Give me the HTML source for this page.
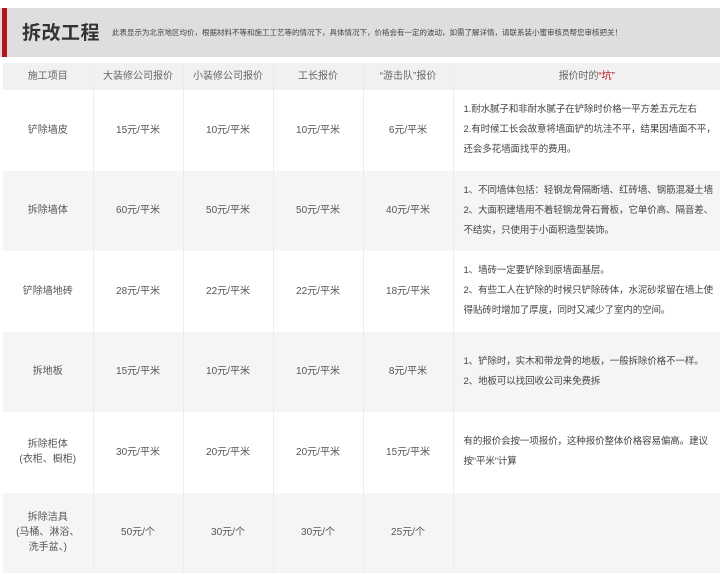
<!DOCTYPE html>
<html><head><meta charset="utf-8"><style>
*{margin:0;padding:0;box-sizing:border-box}
body{width:720px;height:575px;background:#fff;font-family:"Liberation Sans","Noto Sans CJK SC",sans-serif;overflow:hidden;position:relative}
.band{position:absolute;left:0;top:8px;width:720px;height:49px;background:#dedede}
.bar{position:absolute;left:2px;top:8px;width:5px;height:49px;background:#b5161d}
.t{position:absolute;left:22px;top:18px;font-size:19px;font-weight:bold;color:#333;letter-spacing:0.5px}
.s{position:absolute;left:112px;top:27px;font-size:7.5px;color:#444;white-space:nowrap}
table{position:absolute;left:3px;top:63px;border-collapse:collapse;table-layout:fixed;width:717px}
td{border-right:1px solid #ececec;font-size:10px;color:#555;text-align:center;vertical-align:middle;line-height:15px;overflow:hidden}
td:last-child{border-right:none;text-align:left;padding-left:10px;color:#444;line-height:20px;font-size:9.5px;white-space:nowrap;letter-spacing:-0.1px}
tr.h td{height:27px;background:#f1f1f1;color:#666}
tr.h td:last-child{text-align:center;padding-left:0;font-size:10px}
tr.g td{background:#f5f5f5}
tr.r td{height:80.5px}
.red{color:#b5161d}
</style></head><body>
<div class="band"></div><div class="bar"></div>
<div class="t">拆改工程</div>
<div class="s">此表显示为北京地区均价，根据材料不等和施工工艺等的情况下，具体情况下，价格会有一定的波动，如需了解详情，请联系装小蜜审核员帮您审核把关！</div>
<table>
<colgroup><col style="width:90px"><col style="width:90px"><col style="width:90px"><col style="width:90px"><col style="width:90px"><col></colgroup>
<tr class="h"><td>施工项目</td><td>大装修公司报价</td><td>小装修公司报价</td><td>工长报价</td><td>“游击队”报价</td><td>报价时的<span class="red">“坑”</span></td></tr>
<tr class="r"><td>铲除墙皮</td><td>15元/平米</td><td>10元/平米</td><td>10元/平米</td><td>6元/平米</td><td>1.耐水腻子和非耐水腻子在铲除时价格一平方差五元左右<br>2.有时候工长会故意将墙面铲的坑洼不平，结果因墙面不平，<br>还会多花墙面找平的费用。</td></tr>
<tr class="r g"><td>拆除墙体</td><td>60元/平米</td><td>50元/平米</td><td>50元/平米</td><td>40元/平米</td><td>1、不同墙体包括：轻钢龙骨隔断墙、红砖墙、钢筋混凝土墙<br>2、大面积建墙用不着轻钢龙骨石膏板，它单价高、隔音差、<br>不结实，只使用于小面积造型装饰。</td></tr>
<tr class="r"><td>铲除墙地砖</td><td>28元/平米</td><td>22元/平米</td><td>22元/平米</td><td>18元/平米</td><td>1、墙砖一定要铲除到原墙面基层。<br>2、有些工人在铲除的时候只铲除砖体，水泥砂浆留在墙上使<br>得贴砖时增加了厚度，同时又减少了室内的空间。</td></tr>
<tr class="r g"><td>拆地板</td><td>15元/平米</td><td>10元/平米</td><td>10元/平米</td><td>8元/平米</td><td>1、铲除时，实木和带龙骨的地板，一般拆除价格不一样。<br>2、地板可以找回收公司来免费拆</td></tr>
<tr class="r"><td>拆除柜体<br>(衣柜、橱柜)</td><td>30元/平米</td><td>20元/平米</td><td>20元/平米</td><td>15元/平米</td><td>有的报价会按一项报价，这种报价整体价格容易偏高。建议<br>按“平米”计算</td></tr>
<tr class="r g"><td>拆除洁具<br>(马桶、淋浴、<br>洗手盆、)</td><td>50元/个</td><td>30元/个</td><td>30元/个</td><td>25元/个</td><td></td></tr>
</table>
</body></html>
